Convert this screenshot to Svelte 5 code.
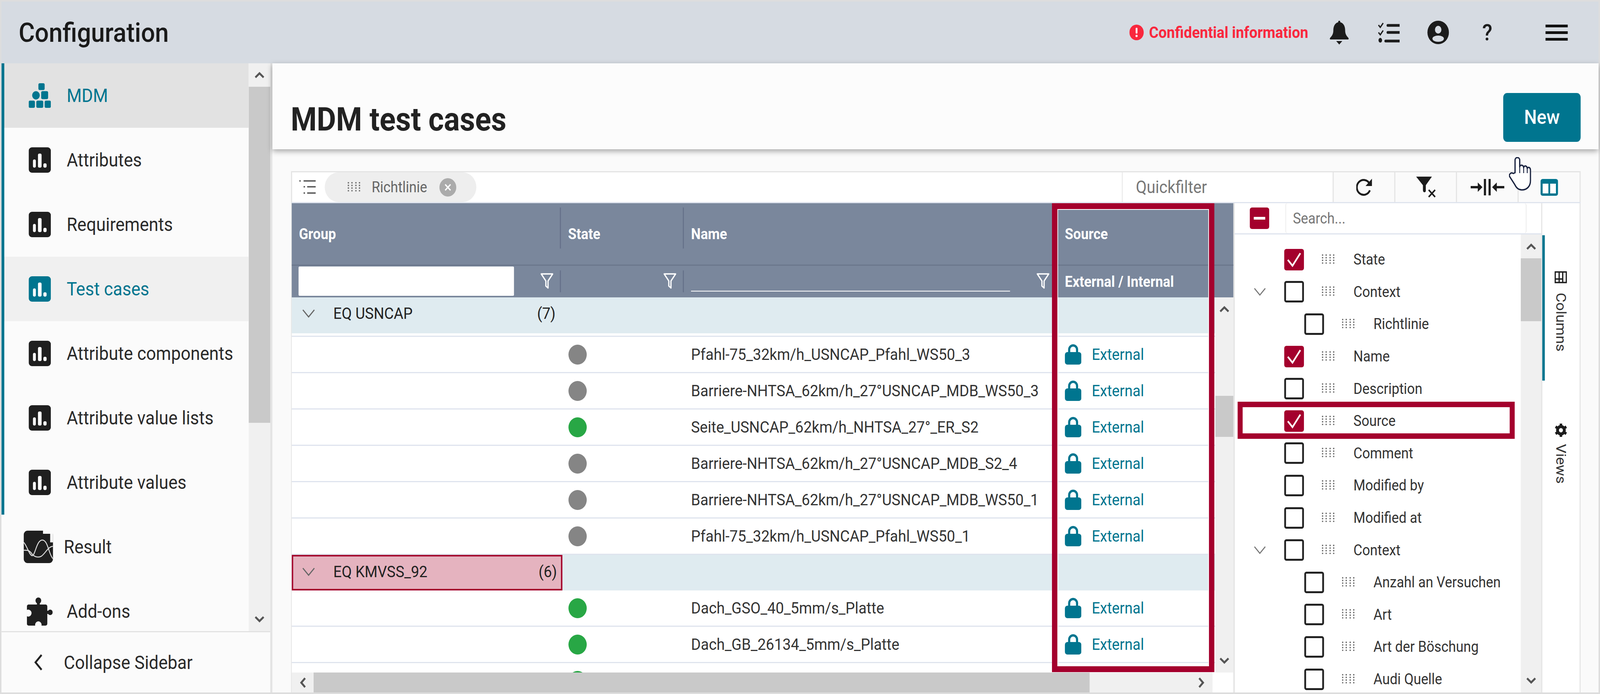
<script>
  const fit = Math.min(1, window.innerWidth / 4464);
  const nav = [
    { label: 'MDM', icon: 'mdm', bar: true, active: true },
    { label: 'Attributes', icon: 'bars', bar: true },
    { label: 'Requirements', icon: 'bars', bar: true },
    { label: 'Test cases', icon: 'bars', bar: true, current: true },
    { label: 'Attribute components', icon: 'bars', bar: true },
    { label: 'Attribute value lists', icon: 'bars', bar: true },
    { label: 'Attribute values', icon: 'bars', bar: true },
    { label: 'Result', icon: 'result' },
    { label: 'Add-ons', icon: 'puzzle' }
  ];
  const rows = [
    { group: 'EQ USNCAP', count: '(7)', pink: false },
    { name: 'Pfahl-75_32km/h_USNCAP_Pfahl_WS50_3', state: 'gray' },
    { name: 'Barriere-NHTSA_62km/h_27°USNCAP_MDB_WS50_3', state: 'gray' },
    { name: 'Seite_USNCAP_62km/h_NHTSA_27°_ER_S2', state: 'green' },
    { name: 'Barriere-NHTSA_62km/h_27°USNCAP_MDB_S2_4', state: 'gray' },
    { name: 'Barriere-NHTSA_62km/h_27°USNCAP_MDB_WS50_1', state: 'gray' },
    { name: 'Pfahl-75_32km/h_USNCAP_Pfahl_WS50_1', state: 'gray' },
    { group: 'EQ KMVSS_92', count: '(6)', pink: true },
    { name: 'Dach_GSO_40_5mm/s_Platte', state: 'green' },
    { name: 'Dach_GB_26134_5mm/s_Platte', state: 'green' },
    { name: '', state: 'green', partial: true }
  ];
  const cols = [
    { label: 'State', checked: true },
    { label: 'Context', chev: true },
    { label: 'Richtlinie', child: true },
    { label: 'Name', checked: true },
    { label: 'Description' },
    { label: 'Source', checked: true },
    { label: 'Comment' },
    { label: 'Modified by' },
    { label: 'Modified at' },
    { label: 'Context', chev: true },
    { label: 'Anzahl an Versuchen', child: true },
    { label: 'Art', child: true },
    { label: 'Art der Böschung', child: true },
    { label: 'Audi Quelle', child: true }
  ];
</script>

{#snippet dots(cls)}
  <svg class={cls} viewBox="0 0 37 27" aria-hidden="true">
    {#each [2, 12, 23, 33] as x}
      <line x1={x} x2={x} y1="0" y2="27" stroke="#666" stroke-width="3.4" stroke-dasharray="3.4 3.4" />
    {/each}
  </svg>
{/snippet}

{#snippet funnel(cls)}
  <svg class={cls} viewBox="0 0 36 42" aria-hidden="true">
    <path d="M2 2h32L21 20v18l-6-5V20z" fill="none" stroke="#fff" stroke-width="3.5" stroke-linejoin="round" />
  </svg>
{/snippet}

{#snippet arrow(dir)}
  <svg class="arrow {dir}" viewBox="0 0 34 20" aria-hidden="true">
    <path d="M4 17 17 5l13 12" fill="none" stroke="#555" stroke-width="6" />
  </svg>
{/snippet}

<div class="app" style="transform: scaleX({fit})">
  <header class="top">
    <h1>Configuration</h1>
    <div class="conf">
      <svg class="conf-ico" viewBox="0 0 40 40" aria-hidden="true">
        <circle cx="20" cy="20" r="20" fill="#f9273d" />
        <rect x="17.5" y="8" width="5" height="15" rx="2" fill="#fff" />
        <circle cx="20" cy="29" r="3" fill="#fff" />
      </svg>
      <span>Confidential information</span>
    </div>
    <svg class="i-bell" viewBox="0 0 53 61" aria-hidden="true">
      <path fill="#1c1c1c" d="M26.5 0c-2 0-3 1.5-3 4C14 6 10 15 10 25c0 9-4 14-9 19-1.5 1.5-1 4 1 4h49c2 0 2.5-2.5 1-4-5-5-9-10-9-19 0-10-4-19-13.500-21 0-2.500-1-4-3-4z" />
      <path fill="#1c1c1c" d="M18 52h17l-8.500 9z" />
    </svg>
    <svg class="i-check" viewBox="0 0 60 53" aria-hidden="true">
      <g fill="none" stroke="#1c1c1c">
        <path d="M1 7l5 6 8-11M1 26l5 6 8-11" stroke-width="3.5" />
        <path d="M27 8h32M27 26h32M21 48h38" stroke-width="7" stroke-linecap="round" />
      </g>
      <ellipse cx="6" cy="46" rx="5" ry="6" fill="#1c1c1c" />
    </svg>
    <svg class="i-acct" viewBox="0 0 61 60" aria-hidden="true">
      <circle cx="30.5" cy="30" r="30" fill="#1c1c1c" />
      <ellipse cx="30.5" cy="23" rx="9" ry="10" fill="#d6dbe2" />
      <ellipse cx="30.5" cy="46" rx="16" ry="8" fill="#d6dbe2" />
    </svg>
    <span class="help">?</span>
    <div class="burger"><i></i><i></i><i></i></div>
  </header>

  <div class="body">
    <aside class="side">
      <div class="side-top">
        <nav class="nav">
          {#each nav as item}
            <div class="item" class:bar={item.bar} class:active={item.active} class:current={item.current} class:res={item.icon === 'result'} class:puz={item.icon === 'puzzle'}>
              {#if item.icon === 'mdm'}
                <svg class="ico" viewBox="0 0 64 65" aria-hidden="true">
                  <g fill="#00758f">
                    <rect x="28" y="0" width="18" height="18" rx="4" />
                    <circle cx="21" cy="32" r="11" />
                    <rect x="36" y="21" width="20" height="21" rx="4" />
                    <rect x="0" y="46" width="18" height="19" rx="4" />
                    <rect x="22" y="46" width="20" height="19" rx="4" />
                    <rect x="46" y="46" width="18" height="19" rx="4" />
                  </g>
                </svg>
              {:else if item.icon === 'bars'}
                <svg class="ico" viewBox="0 0 62 65" aria-hidden="true">
                  <rect width="62" height="65" rx="9" fill={item.current ? '#00758f' : '#1f1f1f'} />
                  <rect x="12" y="31" width="8" height="21" rx="4" fill="#fff" />
                  <rect x="26" y="16" width="10" height="36" rx="4" fill="#fff" />
                  <rect x="41" y="41" width="9" height="11" rx="4" fill="#fff" />
                </svg>
              {:else if item.icon === 'result'}
                <svg class="ico-res" viewBox="0 0 82 83" aria-hidden="true">
                  <rect width="82" height="83" rx="11" fill="#1f1f1f" />
                  <path d="M54 0h28v30h-8V8H54z" fill="#fbfbfb" />
                  <g fill="none" stroke="#ddd" stroke-width="2.5">
                    <path d="M0 30c8 6 16 34 24 34s12-40 28-40 18 38 30 48" />
                    <path d="M0 50c10 0 16 0 22 8s16 12 26 8 20-26 34-26" />
                  </g>
                </svg>
              {:else}
                <svg class="ico-puz" viewBox="0 0 72 72" aria-hidden="true">
                  <circle cx="32" cy="8" r="8" fill="#1f1f1f" />
                  <rect x="28" y="10" width="8" height="12" fill="#1f1f1f" />
                  <rect x="0" y="18" width="57" height="54" rx="5" fill="#1f1f1f" />
                  <rect x="55" y="34" width="9" height="8" fill="#1f1f1f" />
                  <circle cx="65" cy="38" r="7" fill="#1f1f1f" />
                  <circle cx="4" cy="40" r="9" fill="#fbfbfb" />
                  <circle cx="32" cy="70" r="9" fill="#fbfbfb" />
                </svg>
              {/if}
              <span>{item.label}</span>
            </div>
          {/each}
        </nav>
        <div class="sb-v side-sb">
          <div class="sb-btn">{@render arrow('up')}</div>
          <div class="sb-thumb side-thumb"></div>
          <div class="sb-rest"></div>
          <div class="sb-btn end">{@render arrow('down')}</div>
        </div>
      </div>
      <div class="collapse">
        <svg class="coll-ico" viewBox="0 0 24 42" aria-hidden="true">
          <path d="M21 2 4 21l17 19" fill="none" stroke="#222" stroke-width="5" />
        </svg>
        <span>Collapse Sidebar</span>
      </div>
    </aside>

    <main class="main">
      <div class="pagehead">
        <h2>MDM test cases</h2>
        <button class="new">New</button>
      </div>

      <div class="content">
        <div class="toolbar">
          <div class="tb-group">
            <svg class="i-list" viewBox="0 0 46 36" aria-hidden="true">
              <g fill="none" stroke="#555" stroke-width="3.5">
                <path d="M0 2h4M12 2h34M12 17h4M22 17h24M12 33h4M22 33h24" />
              </g>
            </svg>
            <div class="chip">
              {@render dots('chip-dots')}
              <span>Richtlinie</span>
              <svg class="chip-x" viewBox="0 0 47 47" aria-hidden="true">
                <circle cx="23.5" cy="23.5" r="23.5" fill="#ababab" />
                <path d="M16 16l15 15M31 16 16 31" stroke="#fff" stroke-width="3.5" />
              </svg>
            </div>
          </div>
          <div class="tb-quick">Quickfilter</div>
          <div class="tb-btn">
            <svg class="i-ref" viewBox="0 0 44 44" aria-hidden="true">
              <path d="M37 13A19 19 0 1 0 38 30" fill="none" stroke="#1c1c1c" stroke-width="5" />
              <path d="M44 0v19H26z" fill="#1c1c1c" />
            </svg>
          </div>
          <div class="tb-btn">
            <svg class="i-fx" viewBox="0 0 56 54" aria-hidden="true">
              <path d="M1 0h44L28 22v14c0 3-2 4-4 4s-4-2-4-5V22z" fill="#1c1c1c" />
              <path d="M36 34l18 18M54 34 36 52" stroke="#1c1c1c" stroke-width="4" />
            </svg>
          </div>
          <div class="tb-btn">
            <svg class="i-col" viewBox="0 0 94 42" aria-hidden="true">
              <g fill="#1c1c1c">
                <rect x="0" y="18" width="22" height="6" />
                <path d="M20 9 33 21 20 33z" />
                <rect x="37" y="0" width="6" height="42" />
                <rect x="50" y="0" width="6" height="42" />
                <path d="M73 9 60 21 73 33z" />
                <rect x="72" y="18" width="22" height="6" />
              </g>
            </svg>
          </div>
          <div class="tb-btn last">
            <svg class="i-cols" viewBox="0 0 49 43" aria-hidden="true">
              <rect width="49" height="43" rx="6" fill="#00758f" />
              <rect x="6" y="12" width="16" height="25" fill="#fff" />
              <rect x="27" y="12" width="16" height="25" fill="#fff" />
            </svg>
          </div>
        </div>

        <div class="grid-area">
          <section class="table">
            <div class="th-row">
              <div class="th sep">Group</div>
              <div class="th sep">State</div>
              <div class="th">Name</div>
              <div class="th src">Source</div>
            </div>
            <div class="tf-row">
              <div class="tf sep">
                <div class="tf-input"></div>
                {@render funnel('fn fn-a')}
              </div>
              <div class="tf sep">{@render funnel('fn fn-b')}</div>
              <div class="tf">
                <div class="tf-line"></div>
                {@render funnel('fn fn-c')}
              </div>
              <div class="tf tf-src">External / Internal</div>
            </div>
            <div class="mid">
              <div class="rows">
                {#each rows as r}
                  {#if r.group}
                    <div class="grp" class:first={!r.pink}>
                      <div class="grp-cell" class:pink={r.pink}>
                        <svg class="chev-g" viewBox="0 0 36 22" aria-hidden="true">
                          <path d="M2 2l16 18L34 2" fill="none" stroke="#666" stroke-width="3" />
                        </svg>
                        <span class="grp-name">{r.group}</span>
                        <span class="grp-count">{r.count}</span>
                      </div>
                    </div>
                    {#if !r.pink}<div class="gap"></div>{/if}
                  {:else}
                    <div class="row">
                      <div></div>
                      <div class="cell-state"><span class="dot {r.state}"></span></div>
                      <div class="cell-name">{r.name}</div>
                      {#if !r.partial}
                        <div class="cell-src">
                          <svg class="lock" viewBox="0 0 46 52" aria-hidden="true">
                            <path d="M12 24V14a11 11 0 0 1 22 0v10" fill="none" stroke="#00758f" stroke-width="6" />
                            <rect y="20" width="46" height="32" rx="7" fill="#00758f" />
                          </svg>
                          <span>External</span>
                        </div>
                      {/if}
                    </div>
                  {/if}
                {/each}
              </div>
              <div class="sb-v tbl-sb">
                <div class="sb-btn">{@render arrow('up')}</div>
                <div class="sb-rest tbl-a"></div>
                <div class="sb-thumb tbl-thumb"></div>
                <div class="sb-rest"></div>
                <div class="sb-btn end">{@render arrow('down')}</div>
              </div>
            </div>
            <div class="hscroll">
              <div class="hs-btn">{@render arrow('left')}</div>
              <div class="hs-thumb"></div>
              <div class="hs-rest">{@render arrow('right')}</div>
            </div>
            <div class="redbox"></div>
          </section>

          <section class="panel">
            <div class="panel-main">
              <div class="searchrow">
                <div class="minus"><i></i></div>
                <div class="search">Search...</div>
                <div class="search-end"></div>
              </div>
              <div class="tree-wrap">
                <div class="tree">
                  {#each cols as c}
                    <div class="col-row" class:child={c.child}>
                      <div class="chev-slot">
                        {#if c.chev}
                          <svg class="chev-t" viewBox="0 0 36 22" aria-hidden="true">
                            <path d="M2 2l16 18L34 2" fill="none" stroke="#777" stroke-width="3" />
                          </svg>
                        {/if}
                      </div>
                      <div class="cb" class:on={c.checked}>
                        {#if c.checked}
                          <svg viewBox="0 0 55 55" aria-hidden="true">
                            <path d="M10 28l13 15L45 11" fill="none" stroke="#fff" stroke-width="4.5" />
                          </svg>
                        {/if}
                      </div>
                      {@render dots('col-dots')}
                      <span class="col-label">{c.label}</span>
                    </div>
                  {/each}
                </div>
                <div class="sb-v panel-sb">
                  <div class="sb-btn short">{@render arrow('up')}</div>
                  <div class="sb-thumb panel-thumb"></div>
                  <div class="sb-rest"></div>
                  <div class="sb-btn end">{@render arrow('down')}</div>
                </div>
              </div>
            </div>
            <div class="tabs">
              <div class="tab tab-columns">
                <svg class="tab-ico" viewBox="0 0 31 35" aria-hidden="true">
                  <rect x="2" y="2" width="27" height="31" fill="none" stroke="#1c1c1c" stroke-width="3.5" />
                  <path d="M2 12h27M2 22h27M20 12v21" stroke="#1c1c1c" stroke-width="3.5" fill="none" />
                </svg>
                <span>Columns</span>
              </div>
              <div class="tab tab-views">
                <svg class="tab-ico gear" viewBox="0 0 36 38" aria-hidden="true">
                  <circle cx="18" cy="19" r="9.5" fill="none" stroke="#1c1c1c" stroke-width="8" />
                  <path d="M18 2v6M18 30v6M3 10l5 3M28 25l5 3M3 28l5-3M28 13l5-3" stroke="#1c1c1c" stroke-width="7" />
                </svg>
                <span>Views</span>
              </div>
            </div>
            <div class="srcbox"></div>
          </section>
        </div>
      </div>
    </main>
  </div>

  <svg class="hand" viewBox="0 0 62 86" aria-hidden="true">
    <path d="M17 40V8C17-1 30-1 30 8V25C31 19 40 19 41 27 42 21 50 21 51 29 53 24 60 26 60 34V60C60 75 50 84 36 84 26 84 20 78 16 70L2 50C-1 44 6 38 12 42Z" fill="#fff" stroke="#1a2340" stroke-width="3.5" stroke-linejoin="round" />
    <path d="M30 25v16M41 27v14M51 29v12" stroke="#1a2340" stroke-width="2.5" fill="none" />
  </svg>
</div>

<style>
  :global(body) {
    margin: 0;
    overflow: hidden;
    background: #dddddd;
  }
  .app {
    position: relative;
    box-sizing: border-box;
    width: 4464px;
    height: 1776px;
    padding: 4px;
    display: flex;
    flex-direction: column;
    font-family: Roboto, "Liberation Sans", sans-serif;
    color: #222;
    overflow: hidden;
    background: #dddddd;
    transform-origin: 0 0;
  }
  .top {
    flex: 0 0 158px;
    display: flex;
    align-items: center;
    background: #d6dbe2;
    padding: 0 86px 0 48px;
  }
  h1 {
    margin: 0 auto 0 0;
    font-size: 69px;
    font-weight: 500;
    color: #1a1a1a;
  }
  .conf {
    display: flex;
    align-items: center;
    gap: 15px;
    margin-right: 60px;
    color: #f9273d;
    font-size: 40.6px;
    font-weight: 700;
  }
  .conf-ico { width: 40px; height: 40px; }
  .i-bell { width: 53px; height: 61px; margin-right: 82px; }
  .i-check { width: 60px; height: 53px; margin-right: 77px; }
  .i-acct { width: 61px; height: 60px; margin-right: 91px; }
  .help {
    width: 31px;
    margin-right: 147px;
    font-size: 58px;
    font-weight: 500;
    text-align: center;
    color: #1c1c1c;
  }
  .burger {
    width: 62px;
    display: flex;
    flex-direction: column;
    gap: 10px;
  }
  .burger i { display: block; height: 7px; background: #111; }

  .body { flex: 1; display: flex; min-height: 0; }

  .side {
    flex: 0 0 750px;
    display: flex;
    flex-direction: column;
    background: #fbfbfb;
    border-right: 6px solid #e4e4e4;
  }
  .side-top {
    flex: 0 0 1453px;
    display: flex;
    min-height: 0;
    border-bottom: 3px solid #e2e2e2;
  }
  .nav { flex: 1; overflow: hidden; }
  .item {
    height: 165px;
    box-sizing: border-box;
    display: flex;
    align-items: center;
    padding-left: 76px;
    font-size: 48px;
    color: #2a2a2a;
  }
  .item span { margin-left: 44px; }
  .item.bar { border-left: 8px solid #00758f; padding-left: 68px; }
  .item.active { background: #e2e2e2; color: #00758f; }
  .item.current { background: #f0f0f0; color: #00758f; }
  .item.res { padding-left: 62px; }
  .item.res span { margin-left: 30px; }
  .item.puz { padding-left: 71px; }
  .item.puz span { margin-left: 39px; }
  .ico { width: 62px; height: 65px; }
  .ico-res { width: 82px; height: 83px; }
  .ico-puz { width: 72px; height: 72px; }

  .sb-v {
    display: flex;
    flex-direction: column;
    background: #f0f0f0;
  }
  .side-sb { flex: 0 0 60px; }
  .sb-btn {
    flex: 0 0 60px;
    display: flex;
    align-items: center;
    justify-content: center;
  }
  .sb-btn.end { flex-basis: 60px; }
  .sb-thumb { background: #c9c9c9; }
  .sb-rest { flex: 1; }
  .side-thumb { flex: 0 0 860px; }
  .arrow { width: 30px; height: 18px; display: block; }
  .arrow.down { transform: rotate(180deg); }
  .arrow.left { transform: rotate(-90deg); }
  .arrow.right { transform: rotate(90deg); }

  .collapse {
    flex: 1;
    display: flex;
    align-items: center;
    padding-left: 91px;
    font-size: 48px;
    color: #2a2a2a;
  }
  .coll-ico { width: 24px; height: 42px; margin-right: 59px; }

  .main { flex: 1; display: flex; flex-direction: column; min-width: 0; background: #fafafa; }
  .pagehead {
    flex: 0 0 220px;
    position: relative;
    z-index: 1;
    display: flex;
    align-items: center;
    justify-content: space-between;
    padding: 0 50px 0 51px;
    background: #fcfcfc;
    box-shadow: 0 5px 14px rgba(0, 0, 0, 0.35);
  }
  h2 {
    margin: 66px 0 0;
    font-size: 83px;
    font-weight: 700;
    color: #222;
  }
  .new {
    width: 216px;
    height: 125px;
    margin-top: 56px;
    border: 0;
    border-radius: 11px;
    background: #00758f;
    color: #fff;
    font: 500 50px Roboto, sans-serif;
  }

  .content {
    flex: 1;
    display: flex;
    flex-direction: column;
    min-height: 0;
    padding: 56px 50px 0 52px;
  }
  .toolbar {
    flex: 0 0 82px;
    box-sizing: border-box;
    display: flex;
    background: #fff;
    border: 3px solid #e4e4e4;
    border-bottom: 3px solid #dfe4ee;
    border-right: 0;
  }
  .tb-group {
    flex: 1;
    display: flex;
    align-items: stretch;
    padding-left: 20px;
    min-width: 0;
  }
  .i-list { width: 46px; height: 36px; align-self: center; }
  .chip {
    margin-left: 25px;
    width: 423px;
    box-sizing: border-box;
    border-radius: 40px;
    background: #eeeeee;
    display: flex;
    align-items: center;
    padding-left: 64px;
    font-size: 38px;
    color: #666;
  }
  .chip-dots { width: 37px; height: 27px; margin-right: 30px; }
  .chip-x { width: 47px; height: 47px; margin-left: 34px; }
  .tb-quick {
    flex: 0 0 588px;
    box-sizing: border-box;
    display: flex;
    align-items: center;
    padding-left: 37px;
    border-left: 2px solid #e4e4e4;
    font-size: 44px;
    color: #777;
  }
  .tb-btn {
    flex: 0 0 172px;
    box-sizing: border-box;
    display: flex;
    align-items: center;
    justify-content: center;
    border-left: 3px solid #e4e4e4;
    background: #fafafa;
  }
  .tb-btn.last { flex-basis: 176px; border-right: 3px solid #e4e4e4; }
  .i-ref { width: 44px; height: 44px; }
  .i-fx { width: 56px; height: 54px; }
  .i-col { width: 94px; height: 42px; }
  .i-cols { width: 49px; height: 43px; }

  .grid-area {
    flex: 1;
    display: flex;
    min-height: 0;
    border-left: 2px solid #e4e4e4;
  }
  .table {
    position: relative;
    flex: 0 0 2631px;
    display: flex;
    flex-direction: column;
    box-sizing: border-box;
    border-right: 4px solid #e4e4e4;
    background: #fff;
    min-width: 0;
  }
  .th-row, .tf-row, .row, .grp {
    display: grid;
    grid-template-columns: 751px 343px 1027px 1fr;
  }
  .th-row {
    flex: 0 0 160px;
    box-sizing: border-box;
    background: #7a879c;
    border-bottom: 3px solid #6b778c;
  }
  .th {
    position: relative;
    display: flex;
    align-items: center;
    padding-left: 20px;
    font-size: 38px;
    font-weight: 700;
    color: #fff;
  }
  .th.src { padding-left: 36px; }
  .th.sep::after, .tf.sep::after {
    content: "";
    position: absolute;
    right: 0;
    width: 3px;
    background: #66718a;
  }
  .th.sep::after { top: 11px; bottom: 41px; }
  .tf.sep::after { top: 12px; bottom: 13px; }
  .tf-row { flex: 0 0 81px; background: #7a879c; }
  .tf { position: relative; display: flex; align-items: center; min-width: 0; }
  .tf-input {
    position: absolute;
    left: 19px;
    top: 2px;
    width: 601px;
    height: 75px;
    background: #fff;
    border-radius: 3px;
  }
  .tf-line {
    position: absolute;
    left: 20px;
    top: 64px;
    width: 890px;
    height: 2px;
    background: #fff;
  }
  .tf-src { padding-left: 36px; font-size: 38px; font-weight: 700; color: #fff; }
  .tf :global(.fn) { position: absolute; width: 36px; height: 42px; top: 19px; }
  .tf :global(.fn-a) { right: 21px; }
  .tf :global(.fn-b) { right: 21px; }
  .tf :global(.fn-c) { right: 7px; }

  .mid { flex: 0 0 960px; display: flex; min-height: 0; }
  .rows { flex: 1; overflow: hidden; min-width: 0; }
  .sb-v.tbl-sb { flex: 0 0 50px; }
  .tbl-a { flex: 0 0 192px; }
  .tbl-thumb { flex: 0 0 105px; }

  .grp {
    height: 91px;
    box-sizing: border-box;
    background: #dfebf0;
  }
  .grp.first { height: 92px; }
  .grp-cell {
    grid-column: 1;
    position: relative;
    display: flex;
    align-items: center;
    padding: 0 15px 10px 29px;
    font-size: 41px;
    color: #222;
  }
  .grp-cell.pink {
    background: #e5b3bf;
    box-shadow: inset 0 0 0 4px #a4002d;
    padding-bottom: 6px;
    margin-right: -4px;
  }
  .chev-g { width: 36px; height: 22px; margin-right: 51px; }
  .grp-name { flex: 1; }
  .gap { height: 6px; background: #fff; border-bottom: 3px solid #dfe4ee; }
  .row {
    height: 93px;
    box-sizing: border-box;
    border-bottom: 3px solid #dfe4ee;
    align-items: center;
    font-size: 41.4px;
    color: #333;
  }
  .cell-state { display: flex; padding-left: 21px; }
  .dot { width: 51px; height: 51px; border-radius: 50%; }
  .dot.gray { background: #858585; }
  .dot.green { background: #28a745; }
  .cell-name { padding-left: 20px; white-space: nowrap; }
  .cell-src {
    display: flex;
    align-items: center;
    padding-left: 36px;
    font-size: 40.5px;
    color: #00758f;
  }
  .lock { width: 46px; height: 52px; margin-right: 29px; }

  .hscroll {
    flex: 0 0 51px;
    display: flex;
    margin-right: 58px;
    background: #f0f0f0;
  }
  .hs-btn { flex: 0 0 61px; display: flex; align-items: center; justify-content: center; }
  .hs-thumb { flex: 0 0 2165px; background: #c9c9c9; }
  .hs-rest { flex: 1; display: flex; align-items: center; justify-content: flex-end; padding-right: 16px; }
  .redbox {
    position: absolute;
    left: 2121px;
    top: 0;
    width: 453px;
    height: 1200px;
    box-sizing: border-box;
    border: 15px solid #a4002d;
    box-shadow: inset 0 0 0 2px #fff;
    pointer-events: none;
  }

  .panel { position: relative; flex: 1; display: flex; background: #fff; min-width: 0; }
  .panel-main { flex: 0 0 858px; display: flex; flex-direction: column; min-width: 0; }
  .searchrow {
    flex: 0 0 80px;
    box-sizing: border-box;
    display: flex;
    align-items: center;
    border-bottom: 3px solid #dfe4ee;
  }
  .minus {
    width: 54px;
    height: 55px;
    margin-left: 42px;
    margin-right: 45px;
    border-radius: 6px;
    background: #a4002d;
    display: flex;
    align-items: center;
    justify-content: center;
  }
  .minus i { display: block; width: 32px; height: 7px; background: #fff; }
  .search {
    flex: 0 0 673px;
    box-sizing: border-box;
    align-self: stretch;
    display: flex;
    align-items: center;
    padding-left: 19px;
    border: 2px solid #e8e8e8;
    border-top: 0;
    border-bottom: 0;
    border-radius: 6px;
    font-size: 38px;
    color: #777;
  }
  .search-end {
    flex: 1;
    align-self: stretch;
    border-right: 3px solid #e4e4e4;
  }
  .tree-wrap { flex: 1; display: flex; min-height: 0; }
  .tree { flex: 1; padding-top: 23px; overflow: hidden; min-width: 0; }
  .col-row {
    height: 82.6px;
    display: flex;
    align-items: center;
    padding-left: 53px;
    font-size: 38px;
    color: #333;
  }
  .chev-slot { flex: 0 0 85px; display: flex; }
  .col-row.child .chev-slot { flex-basis: 141px; }
  .chev-t { width: 34px; height: 21px; }
  .cb {
    flex: 0 0 55px;
    height: 55px;
    box-sizing: border-box;
    border: 5px solid #222;
    border-radius: 6px;
    background: #fff;
  }
  .cb.on { border: 0; background: #a4002d; }
  .cb svg { display: block; width: 55px; height: 55px; }
  .col-row :global(.col-dots) { flex: 0 0 37px; height: 27px; margin: 0 51px 0 50px; }
  .col-label { white-space: nowrap; }
  .sb-v.panel-sb { flex: 0 0 60px; border-right: 3px solid #e4e4e4; box-sizing: border-box; }
  .sb-btn.short { flex-basis: 61px; }
  .panel-thumb { flex: 0 0 161px; }

  .tabs {
    flex: 1;
    display: flex;
    flex-direction: column;
    border-right: 3px solid #e4e4e4;
  }
  .tab {
    display: flex;
    flex-direction: column;
    align-items: center;
    box-sizing: border-box;
  }
  .tab span {
    writing-mode: vertical-rl;
    font-size: 38px;
    color: #333;
    margin-top: 22px;
  }
  .tab-columns {
    margin-top: 82px;
    height: 372px;
    padding-top: 90px;
    padding-right: 8px;
    border-left: 7px solid #00758f;
  }
  .tab-views { margin-top: 108px; padding-left: 7px; padding-right: 8px; }
  .tab-ico { width: 31px; height: 35px; transform: rotate(90deg); }
  .tab-ico.gear { width: 36px; height: 38px; transform: none; }
  .tab-views span { margin-top: 16px; }
  .srcbox {
    position: absolute;
    left: 8px;
    top: 508px;
    width: 773px;
    height: 95px;
    box-sizing: border-box;
    border: 14px solid #a4002d;
    pointer-events: none;
  }
  .chip :global(.chip-dots) { width: 37px; height: 27px; margin-right: 30px; }

  .hand {
    position: absolute;
    left: 4210px;
    top: 402px;
    width: 62px;
    height: 86px;
    z-index: 5;
  }
</style>
